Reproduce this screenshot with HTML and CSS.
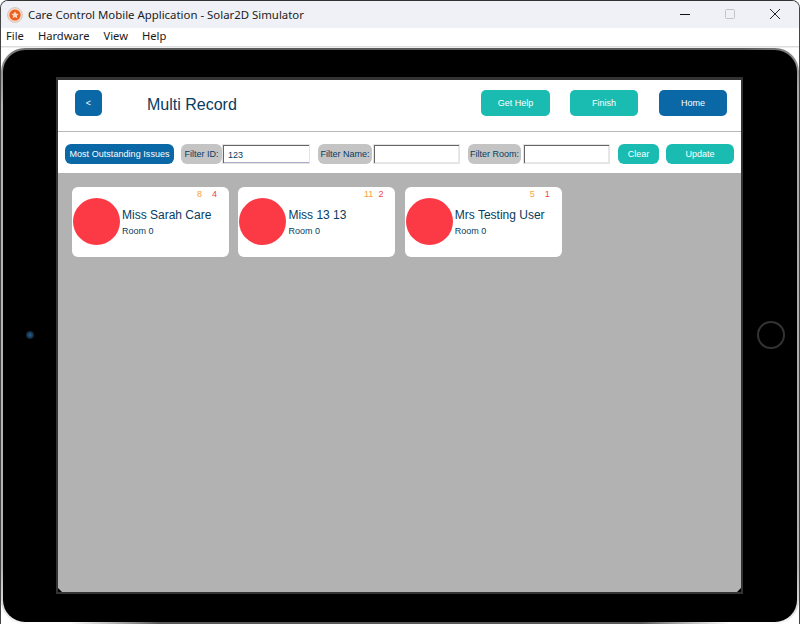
FILE: index.html
```html
<!DOCTYPE html>
<html lang="en">
<head>
<meta charset="utf-8">
<title>Care Control Mobile Application - Solar2D Simulator</title>
<link rel="stylesheet" href="styles.css">
</head>
<body>
<div class="window">
  <div class="titlebar">
    <svg class="appicon" width="16" height="16" viewBox="0 0 16 16"><circle cx="8" cy="8" r="7.5" fill="#f6d9c8" stroke="#c9b5aa" stroke-width=".6"/><circle cx="8" cy="8" r="5.6" fill="#ec5f1e"/><path d="M8 4.2l1.1 2.4 2.6.3-1.9 1.8.5 2.6L8 10l-2.3 1.3.5-2.6-1.9-1.8 2.6-.3z" fill="#fbd9c2"/></svg>
    <span class="title">Care Control Mobile Application - Solar2D Simulator</span>
    <div class="controls">
      <svg class="ctl" width="12" height="12" viewBox="0 0 12 12"><path d="M1 6.5h10" stroke="#111" stroke-width="1"/></svg>
      <svg class="ctl" width="12" height="12" viewBox="0 0 12 12"><rect x="1.5" y="1.5" width="9" height="9" rx="1" fill="none" stroke="#c4c4c6"/></svg>
      <svg class="ctl" width="12" height="12" viewBox="0 0 12 12"><path d="M1 1l10 10M11 1L1 11" stroke="#222" stroke-width="1"/></svg>
    </div>
  </div>
  <div class="menubar"><span>File</span><span>Hardware</span><span>View</span><span>Help</span></div>
  <div class="stage">
    <div class="device">
      <div class="side side-left"><div class="camera"></div></div>
      <div class="screen">
        <header class="head">
          <button class="btn blue back">&lt;</button>
          <h1 class="heading">Multi Record</h1>
          <button class="btn teal help">Get Help</button>
          <button class="btn teal finish">Finish</button>
          <button class="btn blue home">Home</button>
        </header>
        <div class="filters">
          <span class="pill blue most">Most Outstanding Issues</span>
          <span class="pill grey f-id">Filter ID:</span>
          <div class="input i-id">123</div>
          <span class="pill grey f-name">Filter Name:</span>
          <div class="input i-name"></div>
          <span class="pill grey f-room">Filter Room:</span>
          <div class="input i-room"></div>
          <span class="pill teal clear">Clear</span>
          <span class="pill teal update">Update</span>
        </div>
        <main class="cards">
          <article class="card">
            <div class="counts"><span class="amber">8</span><span class="red">4</span></div>
            <div class="body"><div class="dot"></div><div class="info"><div class="name">Miss Sarah Care</div><div class="room">Room 0</div></div></div>
          </article>
          <article class="card">
            <div class="counts counts-tight"><span class="amber">11</span><span class="red">2</span></div>
            <div class="body"><div class="dot"></div><div class="info"><div class="name">Miss 13 13</div><div class="room">Room 0</div></div></div>
          </article>
          <article class="card">
            <div class="counts"><span class="amber">5</span><span class="red">1</span></div>
            <div class="body"><div class="dot"></div><div class="info"><div class="name">Mrs Testing User</div><div class="room">Room 0</div></div></div>
          </article>
        </main>
        <i class="notch notch-l"></i><i class="notch notch-r"></i>
      </div>
      <div class="side side-right"><div class="homekey"></div></div>
    </div>
  </div>
</div>
</body>
</html>
```
FILE: styles.css
```css
* { box-sizing: border-box; }
html, body { margin: 0; padding: 0; }
body { width: 800px; height: 624px; overflow: hidden; background: #fff; font-family: "Liberation Sans", Arial, sans-serif; }
.window { width: 800px; height: 624px; display: flex; flex-direction: column; border-top: 1px solid #333; border-left: 1px solid #444; border-right: 1px solid #444; border-radius: 8px 8px 0 0; overflow: hidden; background: #fff; }
.titlebar { height: 27px; flex: none; background: #eff1f7; display: flex; align-items: center; padding-left: 6px; }
.appicon { flex: none; }
.title { margin-left: 5px; font: 11.4px/16px "Noto Sans", "Open Sans", sans-serif; color: #1c1c1c; }
.controls { margin-left: auto; display: flex; align-items: center; gap: 33px; padding: 0 18px 2px 0; }
.menubar { height: 18px; flex: none; background: #fff; display: flex; gap: 14px; padding-left: 5px; font: 11.2px/16px "Noto Sans", "Open Sans", sans-serif; color: #1a1a1a; }
.stage { flex: 1; min-height: 0; padding-top: 2px; background: linear-gradient(#dcdcdc 0, #dcdcdc 1px, #fff 2px); }
.device { height: 576px; border: 2px solid transparent; border-radius: 24px; background: linear-gradient(#000, #000) padding-box, conic-gradient(#5a5a5c 0deg, #5a5a5c 50deg, #a8a8aa 58deg, #b4b4b6 120deg, #fff 128deg, #fff 131deg, #58585a 140deg, #58585a 220deg, #fff 229deg, #fff 232deg, #b4b4b6 240deg, #b4b4b6 300deg, #5a5a5c 310deg) border-box; display: flex; align-items: stretch; }
.side { flex: none; display: flex; align-items: center; justify-content: center; padding-bottom: 2px; }
.side-left { width: 53px; }
.side-right { flex: 1; }
.camera { width: 8px; height: 8px; border-radius: 50%; background: radial-gradient(circle, #1f5f95 0, #1b4468 35%, #14202b 70%, #000 100%); }
.homekey { width: 28px; height: 28px; border-radius: 50%; border: 2px solid #333; margin-left: 2px; }
.screen { position: relative; width: 687px; margin-top: 27px; margin-bottom: 28px; border: 2px solid #333; border-top-width: 3px; display: flex; flex-direction: column; background: #b2b2b2; }
.head { height: 52px; flex: none; background: #fff; border-bottom: 1px solid #b8b8b8; display: flex; align-items: flex-start; padding: 10px 0 0 17px; }
.btn { border: 0; padding: 0; height: 26px; border-radius: 5px; color: #fff; font: 9px/26px "Liberation Sans", Arial, sans-serif; text-align: center; }
.blue { background: #0968a5; }
.teal { background: #1abcb2; }
.back { width: 27px; }
.heading { margin: 0 0 0 45px; width: 334px; font: 400 16px/30px "Liberation Sans", Arial, sans-serif; color: #063c62; }
.help { width: 69px; }
.finish { width: 68px; margin-left: 20px; }
.home { width: 68px; margin-left: 21px; }
.filters { height: 41px; flex: none; background: #fff; display: flex; align-items: flex-start; padding: 12px 0 0 7px; }
.pill { height: 20px; border-radius: 6px; font-size: 9px; line-height: 20px; text-align: center; flex: none; color: #fff; }
.most { width: 109px; letter-spacing: .05px; }
.grey { background: #c4c4c4; color: #063c62; }
.f-id { width: 41px; margin-left: 7px; }
.input { height: 20px; flex: none; background: #fff; border: 1px solid #e4e4e4; box-shadow: inset 1px 1px 0 #666, inset -1px -1px 0 #e8e8e8; font-size: 9px; line-height: 20px; padding-left: 5px; color: #063c62; }
.i-id { width: 88px; box-shadow: inset 1px 1px 0 #666, inset 0 -1px 0 #aac; }
.f-name { width: 54px; margin-left: 8px; }
.i-name { width: 87px; margin-left: 1px; }
.f-room { width: 53px; margin-left: 8px; }
.i-room { width: 87px; margin-left: 2px; }
.clear { width: 41px; margin-left: 8px; }
.update { width: 68px; margin-left: 7px; }
.cards { flex: 1; display: flex; align-items: flex-start; gap: 9.4px; padding: 14px 0 0 14px; }
.card { width: 157px; height: 70px; background: #fff; border-radius: 6px; padding: 3px 0 0 1px; flex: none; }
.counts { height: 8px; display: flex; justify-content: flex-end; gap: 10px; padding-right: 12px; font-size: 9px; line-height: 9px; }
.counts-tight { gap: 5px; }
.amber { color: #f6a13c; }
.red { color: #f2434e; }
.body { display: flex; align-items: center; }
.dot { width: 47px; height: 47px; border-radius: 50%; background: #fb3a46; flex: none; }
.info { margin-left: 2px; padding-top: 2px; }
.name { font-size: 12px; line-height: 14px; color: #063c62; }
.room { font-size: 9px; line-height: 12px; margin-top: 3px; color: #063c62; }
.notch { position: absolute; bottom: 0; width: 4px; height: 4px; background: #000; }
.notch-l { left: 0; clip-path: polygon(0 0, 100% 100%, 0 100%); }
.notch-r { right: 0; clip-path: polygon(100% 0, 100% 100%, 0 100%); }
```
